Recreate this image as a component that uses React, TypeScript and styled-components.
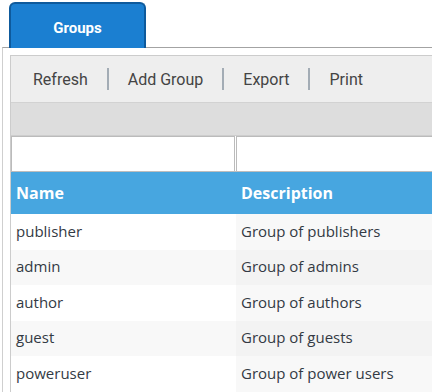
import styled, { createGlobalStyle } from "styled-components"

const GlobalStyle = createGlobalStyle`
  html, body {
    margin: 0;
    padding: 0;
    background: #fff;
    overflow: hidden;
  }
`

const StyledPage = styled.div`
  padding: 2px 0 0 2px;
  width: 430px;
  height: 390px;
  overflow: hidden;
`

const StyledTabStrip = styled.div`
  display: flex;
  padding-left: 7px;
  position: relative;
  z-index: 1;
  margin-bottom: -1px;
`

const StyledTab = styled.div`
  display: flex;
  align-items: center;
  justify-content: center;
  box-sizing: border-box;
  width: 137px;
  height: 46px;
  padding-top: 4px;
  background: #1b7fd1;
  border: 2px solid #0e5a9c;
  border-bottom: none;
  border-radius: 6px 6px 0 0;
  color: #fff;
  font-family: Roboto, "Liberation Sans", sans-serif;
  font-weight: 700;
  font-size: 15px;
`

const StyledPanel = styled.div`
  border-top: 1px solid #a3a3a3;
  border-left: 1px solid #cfcfcf;
  padding: 7px 0 0 7px;
  width: 600px;
`

const StyledGrid = styled.div`
  border-left: 1px solid #cccccc;
`

const StyledToolbar = styled.div`
  display: flex;
  align-items: center;
  height: 46px;
  padding-left: 3px;
  background: #eeeeee;
  border-top: 1px solid #cccccc;
  border-bottom: 1px solid #d2d2d2;
`

const StyledToolButton = styled.span`
  padding: 0 19px;
  font-family: Roboto, "Liberation Sans", sans-serif;
  font-size: 16px;
  color: #444444;
`

const StyledSeparator = styled.span`
  width: 2px;
  height: 22px;
  background: #a3acb5;
`

const StyledGroupBar = styled.div`
  height: 32px;
  background: #dddddd;
  border-bottom: 1px solid #cdcdcd;
`

const StyledFilterRow = styled.div`
  display: grid;
  grid-template-columns: 225px 1fr;
  height: 35px;
  border-bottom: 1px solid #bdbdbd;
`

const StyledFilterInput = styled.div`
  box-sizing: border-box;
  height: 35px;
  margin-right: 1px;
  border: 1px solid #bbbbbb;
  border-bottom: none;
  background: #fff;
`

const StyledTable = styled.div`
  font-family: "Open Sans", "Noto Sans", sans-serif;
`

const StyledHeaderRow = styled.div`
  display: grid;
  grid-template-columns: 225px 1fr;
  height: 42px;
  background: #47a6e0;
`

const StyledHeaderCell = styled.div`
  display: flex;
  align-items: center;
  padding-left: 5px;
  color: #fff;
  font-weight: 700;
  font-size: 16px;
`

const StyledRow = styled.div<{ $alt: boolean }>`
  display: grid;
  grid-template-columns: 225px 1fr;
  height: 35.5px;
  background: ${(p) => (p.$alt ? "#f8f8f8" : "#ffffff")};
`

const StyledCell = styled.div<{ $alt: boolean; $sorted?: boolean }>`
  display: flex;
  align-items: center;
  padding: 0 0 2px 5px;
  font-size: 15px;
  color: #333a44;
  background: ${(p) =>
    p.$sorted ? (p.$alt ? "#f3f3f3" : "#f8f8f8") : "transparent"};
`

const groups = [
  { name: "publisher", description: "Group of publishers" },
  { name: "admin", description: "Group of admins" },
  { name: "author", description: "Group of authors" },
  { name: "guest", description: "Group of guests" },
  { name: "poweruser", description: "Group of power users" },
]

const actions = ["Refresh", "Add Group", "Export", "Print"]

export default function App() {
  return (
    <StyledPage>
      <GlobalStyle />
      <StyledTabStrip>
        <StyledTab>Groups</StyledTab>
      </StyledTabStrip>
      <StyledPanel>
        <StyledGrid>
          <StyledToolbar>
            {actions.map((a, i) => (
              <>
                {i > 0 && <StyledSeparator key={"s" + a} />}
                <StyledToolButton key={a}>{a}</StyledToolButton>
              </>
            ))}
          </StyledToolbar>
          <StyledGroupBar />
          <StyledFilterRow>
            <StyledFilterInput />
            <StyledFilterInput />
          </StyledFilterRow>
          <StyledTable>
            <StyledHeaderRow>
              <StyledHeaderCell>Name</StyledHeaderCell>
              <StyledHeaderCell>Description</StyledHeaderCell>
            </StyledHeaderRow>
            {groups.map((g, i) => (
              <StyledRow key={g.name} $alt={i % 2 === 1}>
                <StyledCell $alt={i % 2 === 1}>{g.name}</StyledCell>
                <StyledCell $alt={i % 2 === 1} $sorted>
                  {g.description}
                </StyledCell>
              </StyledRow>
            ))}
          </StyledTable>
        </StyledGrid>
      </StyledPanel>
    </StyledPage>
  )
}
